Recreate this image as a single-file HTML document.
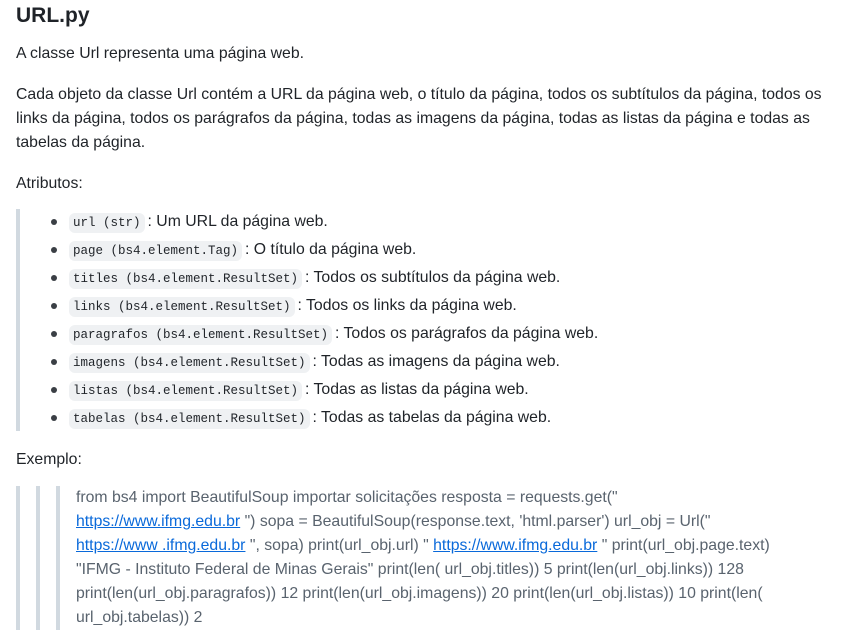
<!DOCTYPE html>
<html><head><meta charset="utf-8"><style>
body{margin:0;background:#fff;width:843px;height:639px;overflow:hidden;font-family:"Liberation Sans",sans-serif;color:#1f2328;font-size:15.8px;position:relative}
.l{position:absolute;white-space:nowrap;line-height:24px}
h1{position:absolute;left:16px;top:2px;margin:0;font-size:21px;font-weight:600;line-height:28px}
.bar{position:absolute;width:4px;background:#d1d9e0}
code{font-family:"Liberation Mono",monospace;font-size:12.5px;background:#eff1f3;border-radius:6px;padding:3px 4px;margin-right:3px}
.dot{position:absolute;left:51px;width:6px;height:6px;border-radius:50%;background:#3a3f45}
.q{color:#59636e}
a{color:#0969da;text-decoration:underline}
</style></head><body>
<h1>URL.py</h1>
<div class="l" style="left:16px;top:42px">A classe Url representa uma página web.</div>
<div class="l" style="left:16px;top:83px">Cada objeto da classe Url contém a URL da página web, o título da página, todos os subtítulos da página, todos os</div>
<div class="l" style="left:16px;top:107px">links da página, todos os parágrafos da página, todas as imagens da página, todas as listas da página e todas as</div>
<div class="l" style="left:16px;top:131px">tabelas da página.</div>
<div class="l" style="left:16px;top:172px">Atributos:</div>
<div class="bar" style="left:16px;top:209px;height:222px"></div>
<div class="dot" style="top:219px"></div><div class="l" style="left:69px;top:210px"><code>url (str)</code>: Um URL da página web.</div>
<div class="dot" style="top:247px"></div><div class="l" style="left:69px;top:238px"><code>page (bs4.element.Tag)</code>: O título da página web.</div>
<div class="dot" style="top:275px"></div><div class="l" style="left:69px;top:266px"><code>titles (bs4.element.ResultSet)</code>: Todos os subtítulos da página web.</div>
<div class="dot" style="top:303px"></div><div class="l" style="left:69px;top:294px"><code>links (bs4.element.ResultSet)</code>: Todos os links da página web.</div>
<div class="dot" style="top:331px"></div><div class="l" style="left:69px;top:322px"><code>paragrafos (bs4.element.ResultSet)</code>: Todos os parágrafos da página web.</div>
<div class="dot" style="top:359px"></div><div class="l" style="left:69px;top:350px"><code>imagens (bs4.element.ResultSet)</code>: Todas as imagens da página web.</div>
<div class="dot" style="top:387px"></div><div class="l" style="left:69px;top:378px"><code>listas (bs4.element.ResultSet)</code>: Todas as listas da página web.</div>
<div class="dot" style="top:415px"></div><div class="l" style="left:69px;top:406px"><code>tabelas (bs4.element.ResultSet)</code>: Todas as tabelas da página web.</div>
<div class="l" style="left:16px;top:448px">Exemplo:</div>
<div class="bar" style="left:16px;top:486px;height:144px"></div>
<div class="bar" style="left:36px;top:486px;height:144px"></div>
<div class="bar" style="left:56px;top:486px;height:144px"></div>
<div class="q">
<div class="l" style="left:76px;top:486px">from bs4 import BeautifulSoup importar solicitações resposta = requests.get("</div>
<div class="l" style="left:76px;top:510px"><a>https://www.ifmg.edu.br</a> ") sopa = BeautifulSoup(response.text, 'html.parser') url_obj = Url("</div>
<div class="l" style="left:76px;top:534px"><a>https://www .ifmg.edu.br</a> ", sopa) print(url_obj.url) " <a>https://www.ifmg.edu.br</a> " print(url_obj.page.text)</div>
<div class="l" style="left:76px;top:558px">"IFMG - Instituto Federal de Minas Gerais" print(len( url_obj.titles)) 5 print(len(url_obj.links)) 128</div>
<div class="l" style="left:76px;top:582px">print(len(url_obj.paragrafos)) 12 print(len(url_obj.imagens)) 20 print(len(url_obj.listas)) 10 print(len(</div>
<div class="l" style="left:76px;top:606px">url_obj.tabelas)) 2</div>
</div>
</body></html>
